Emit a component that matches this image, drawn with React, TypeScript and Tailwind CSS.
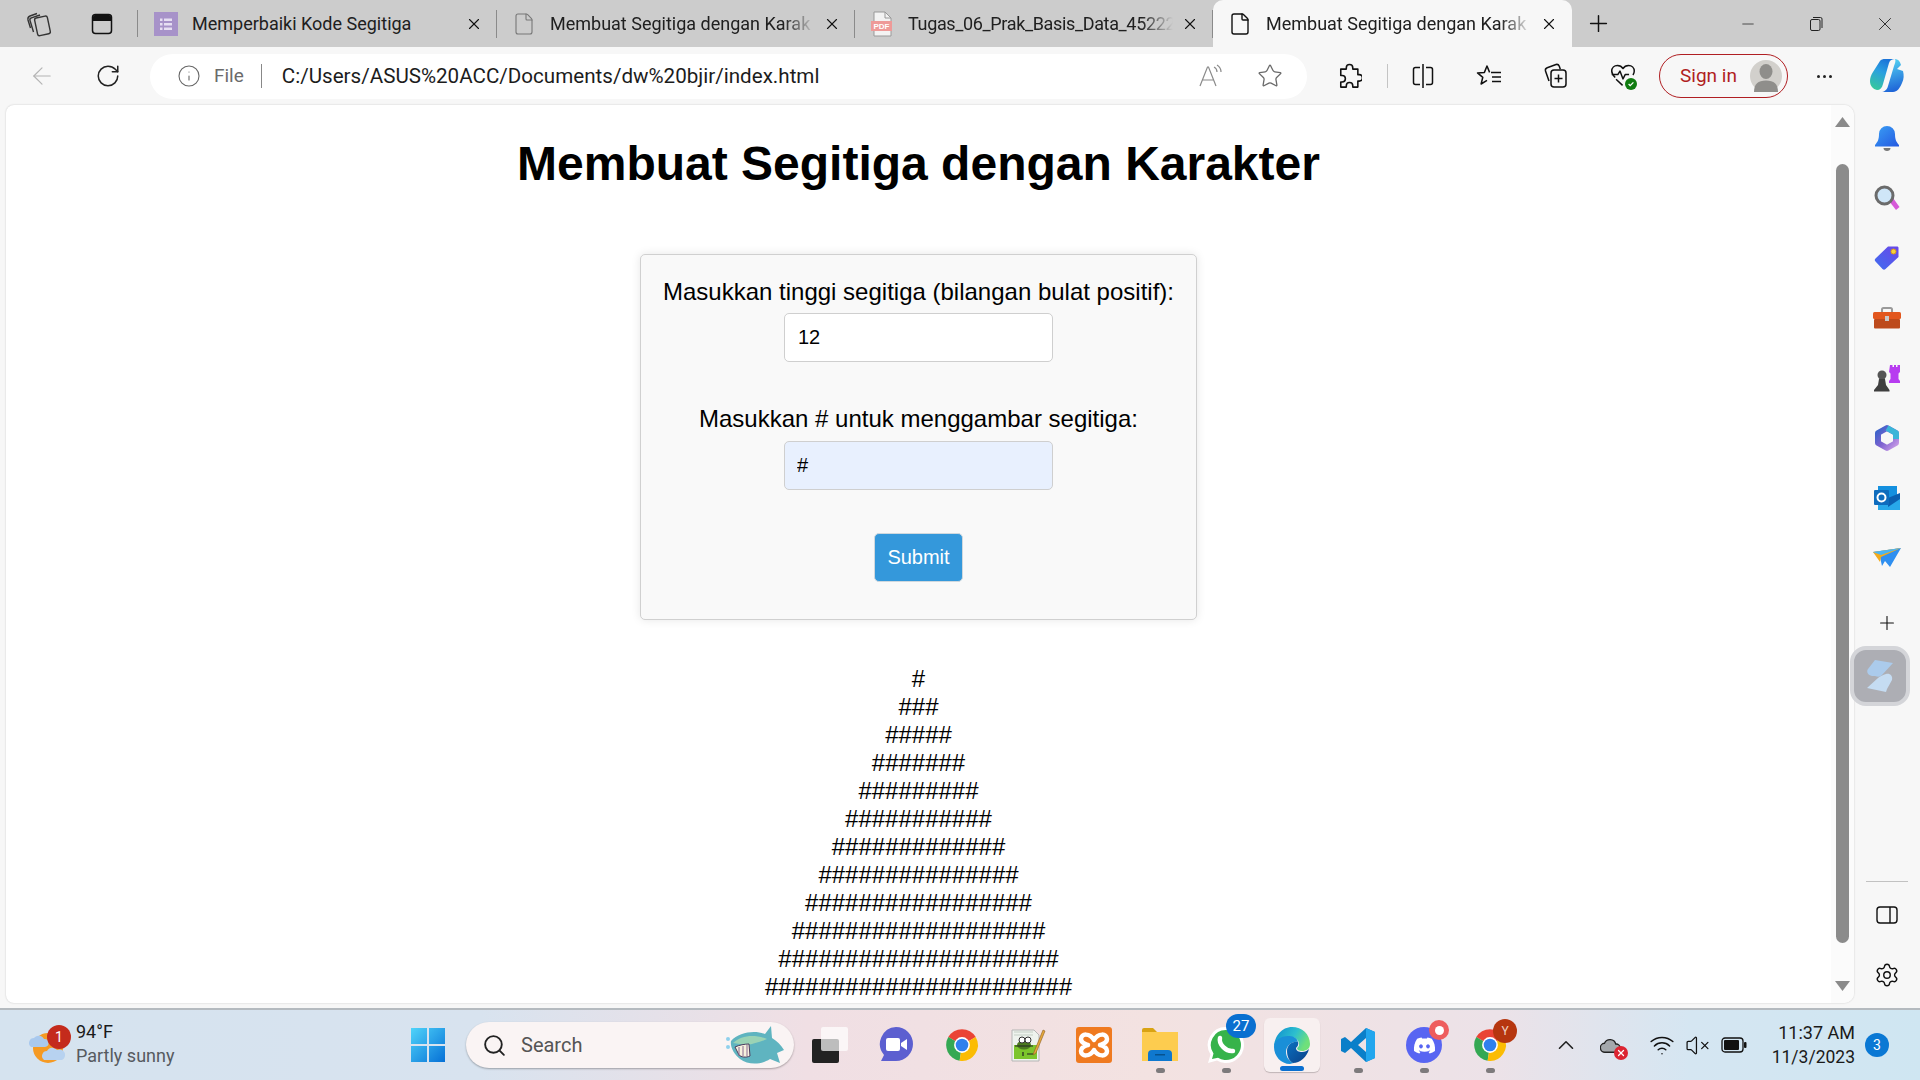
import type { ReactNode } from "react";
import {
  ArrowLeft,
  ChevronUp,
  File,
  Info,
  Minus,
  Plus,
  RotateCw,
  Search,
  Settings,
  Star,
  VolumeX,
  Wifi,
  X,
} from "lucide-react";
import { FaDiscord } from "react-icons/fa";

const chrome = "font-['Roboto','Noto_Sans',sans-serif]";

function FormsIcon() {
  return (
    <svg width="24" height="24" viewBox="0 0 24 24">
      <rect width="24" height="24" fill="#a792c9" />
      <g fill="#e6def2">
        <rect x="6" y="6.500" width="2.500" height="2.500" />
        <rect x="6" y="11" width="2.500" height="2.500" />
        <rect x="6" y="15.500" width="2.500" height="2.500" />
        <rect x="10" y="6.500" width="8" height="2.500" />
        <rect x="10" y="11" width="8" height="2.500" />
        <rect x="10" y="15.500" width="8" height="2.500" />
      </g>
    </svg>
  );
}

function PdfIcon() {
  return (
    <svg width="24" height="26" viewBox="0 0 24 26">
      <path d="M4 1h11l6 6v18H4z" fill="#f3f3f3" stroke="#999" />
      <path d="M15 1v6h6" fill="none" stroke="#999" />
      <rect x="1" y="10" width="21" height="10" fill="#ee9a98" />
      <text x="11.500" y="18" fontSize="8" fontWeight="700" textAnchor="middle" fill="#fff" fontFamily="Liberation Sans">
        PDF
      </text>
    </svg>
  );
}

function Tab({ icon, title, fade, tight, active }: { icon: ReactNode; title: string; fade?: boolean; tight?: boolean; active?: boolean }) {
  return (
    <div
      className={
        active
          ? "flex h-full w-[359px] shrink-0 items-center rounded-t-[10px] bg-[#f7f7f7] pl-[15px] pr-[14px]"
          : "flex h-full w-[358px] shrink-0 items-center border-r border-[#8a8a8a] pl-[15px] pr-[13px] [border-image:linear-gradient(to_bottom,transparent_22%,#8a8a8a_22%,#8a8a8a_80%,transparent_80%)_1]"
      }
    >
      <div className="flex w-[24px] shrink-0 justify-center">{icon}</div>
      <div
        className={
          fade
            ? `ml-[14px] min-w-0 flex-1 whitespace-nowrap text-[18px] text-[#202020] [mask-image:linear-gradient(to_right,black_88%,transparent)] ${tight ? "tracking-[-0.35px]" : ""}`
            : "ml-[14px] min-w-0 flex-1 whitespace-nowrap text-[18px] text-[#202020]"
        }
      >
        {title}
      </div>
      <X size={18} strokeWidth={1.5} className="ml-[8px] shrink-0 text-[#111]" />
    </div>
  );
}

function TabBar() {
  return (
    <div className="flex h-[47px] shrink-0 items-stretch bg-[#cccccc]">
      <div className="flex w-[78px] items-center justify-center">
        <svg width="26" height="26" viewBox="0 0 26 26" fill="none" stroke="#333" strokeWidth="1.400">
          <rect x="10" y="6" width="13" height="18" rx="2" transform="rotate(-12 16 15)" />
          <path d="M7.500 21 4 9.500c-.4-1.200.3-2.200 1.400-2.600L14 4" />
          <path d="M4.500 17 2 9C1.600 7 2.500 5.500 4 5l7-2.500" />
        </svg>
      </div>
      <div className="flex w-[48px] items-center justify-center">
        <svg width="24" height="24" viewBox="0 0 24 24" fill="none">
          <rect x="2.500" y="2.500" width="19" height="19" rx="3" stroke="#111" strokeWidth="1.500" />
          <path d="M3 5a2 2 0 0 1 2-2h14a2 2 0 0 1 2 2v4H3z" fill="#111" />
        </svg>
      </div>
      <div className="my-[10px] ml-[11px] mr-[1px] w-px bg-[#8a8a8a]" />
      <Tab icon={<FormsIcon />} title="Memperbaiki Kode Segitiga" />
      <Tab icon={<File size={24} strokeWidth={1.1} className="text-[#777]" />} title="Membuat Segitiga dengan Karak" fade />
      <Tab icon={<PdfIcon />} title="Tugas_06_Prak_Basis_Data_45222" fade tight />
      <Tab icon={<File size={24} strokeWidth={1.4} className="text-[#111]" />} title="Membuat Segitiga dengan Karak" fade active />
      <div className="flex w-[52px] items-center justify-center">
        <Plus size={27} strokeWidth={1.3} className="text-[#111]" />
      </div>
      <div className="flex-1" />
      <div className="flex w-[68px] items-center justify-center">
        <Minus size={18} strokeWidth={1} className="text-[#222]" />
      </div>
      <div className="flex w-[68px] items-center justify-center">
        <svg width="16" height="16" viewBox="0 0 16 16" fill="none" stroke="#222">
          <rect x="2.500" y="3.500" width="9.500" height="11" rx="1.500" />
          <path d="M5 1.500h7.500a1.500 1.500 0 0 1 1.500 1.500v9" />
        </svg>
      </div>
      <div className="flex w-[70px] items-center justify-center">
        <X size={22} strokeWidth={1} className="text-[#222]" />
      </div>
    </div>
  );
}

function ToolButton({ width, children }: { width: string; children: ReactNode }) {
  return <div className={`${width} flex h-full shrink-0 items-center justify-center`}>{children}</div>;
}

function Avatar() {
  return (
    <svg width="32" height="32" viewBox="0 0 32 32">
      <circle cx="16" cy="16" r="16" fill="#d2d0cc" />
      <ellipse cx="16" cy="11.500" rx="6.500" ry="7.500" fill="#8f8e8b" />
      <path d="M4 32c0-8 4-11.500 12-11.500S28 24 28 32z" fill="#8f8e8b" />
    </svg>
  );
}

function CopilotIcon() {
  return (
    <svg width="36" height="36" viewBox="0 0 36 36">
      <defs>
        <linearGradient id="copilotA" x1="0.2" y1="1" x2="0.6" y2="0">
          <stop offset="0" stopColor="#37c99a" />
          <stop offset="0.6" stopColor="#2a9fe0" />
          <stop offset="1" stopColor="#1c74d8" />
        </linearGradient>
        <linearGradient id="copilotB" x1="0.7" y1="1" x2="0.5" y2="0">
          <stop offset="0" stopColor="#1c5fd6" />
          <stop offset="1" stopColor="#52d2f2" />
        </linearGradient>
      </defs>
      <path d="M11 3c1-1.500 3-2 5-2h10c-3 0-5 1-6 4l-6 21c-1 4-3 6-6 6-4-1-7-4-7-9 0-3 1-6 3-9z" fill="url(#copilotA)" />
      <path d="M26 1c3 0 5 2 6 6l-4 4 6 2c1 4 1 8-1 12-2 5-5 9-9 9H12c3 0 6-2 7-6l6-20c1-3 2-5 1-7z" fill="url(#copilotB)" />
    </svg>
  );
}

function Toolbar() {
  return (
    <div className="flex h-[58px] shrink-0 items-center bg-[#f7f7f7] pl-[10px]">
      <ToolButton width="w-[64px]">
        <ArrowLeft size={28} strokeWidth={1} className="text-[#b4b4b4]" />
      </ToolButton>
      <ToolButton width="w-[68px]">
        <RotateCw size={26} strokeWidth={1.4} className="text-[#222]" />
      </ToolButton>
      <div className="ml-[8px] flex h-[45px] w-[1157px] shrink-0 items-center rounded-full bg-white pl-[27px] pr-[24px]">
        <Info size={24} strokeWidth={1.1} className="text-[#666]" />
        <span className="ml-[13px] pt-[1px] text-[19px] text-[#6b6b6b]">File</span>
        <div className="ml-[17px] h-[24px] w-px bg-[#888]" />
        <span className="ml-[20px] flex-1 whitespace-nowrap pt-[1px] text-[20.600px] text-[#1c1c1c]">
          C:/Users/ASUS%20ACC/Documents/dw%20bjir/index.html
        </span>
        <svg width="28" height="28" viewBox="0 0 28 28" fill="none" stroke="#8a8a8a" strokeWidth="1.200">
          <path d="M3 24 10.500 5h1L19 24M5.500 18h11" />
          <path d="M17 5c2 1 3 3 3 5M20 3c2.500 1.500 4 4 4 7" />
        </svg>
        <Star size={26} strokeWidth={1.2} className="ml-[32px] text-[#6a6a6a]" />
      </div>
      <ToolButton width="ml-[13px] w-[60px]">
        <svg width="24" height="27" viewBox="0 0 26 28" fill="none" stroke="#111" strokeWidth="1.700" strokeLinejoin="round">
          <path d="M9 4.500a3.500 3.500 0 0 1 7 0V6h5.500v6H23a3.500 3.500 0 0 1 0 7h-1.500v6.500H16V24a3.500 3.500 0 0 0-7 0v1.500H3V20h1.500a3.500 3.500 0 0 0 0-7H3V6h6z" />
        </svg>
      </ToolButton>
      <div className="ml-[7px] h-[24px] w-px bg-[#c4c4c4]" />
      <ToolButton width="ml-[5px] w-[60px]">
        <svg width="24" height="26" viewBox="0 0 24 26" fill="none" stroke="#111" strokeWidth="1.500">
          <path d="M9 4.500H4.500a2 2 0 0 0-2 2v13a2 2 0 0 0 2 2H9M15 4.500h4.500a2 2 0 0 1 2 2v13a2 2 0 0 1-2 2H15M12 1v24" />
        </svg>
      </ToolButton>
      <ToolButton width="w-[71px]">
        <svg width="26" height="26" viewBox="0 0 26 26" fill="none" stroke="#111" strokeWidth="1.500" strokeLinejoin="round">
          <path d="M13.600 9.400 11 3 8.400 9.400 1.500 9.900 6.800 14.300 5.100 21 11 17.400" />
          <path d="M15 9.500h10M16 14h9M16 18.500h9" />
        </svg>
      </ToolButton>
      <ToolButton width="w-[63px]">
        <svg width="28" height="28" viewBox="0 0 28 28" fill="none" stroke="#111" strokeWidth="1.500">
          <path d="M7 19 3.500 9c-.4-1.500.3-2.700 1.700-3.200L14 2.500c1.500-.4 2.700.3 3.300 1.700l1 3" />
          <rect x="9" y="8" width="15" height="17" rx="3" />
          <path d="M16.500 12.500v8M12.500 16.500h8" />
        </svg>
      </ToolButton>
      <ToolButton width="w-[71px]">
        <div className="relative h-[28px] w-[26px]">
          <svg width="26" height="26" viewBox="0 0 30 28" fill="none" stroke="#111" strokeWidth="1.700" strokeLinejoin="round">
            <path d="M6 17C3.500 14.500 2 12.500 2 9.500 2 5.500 5 3 8.500 3c2.500 0 5 1 6.500 3.500C16.500 4 19 3 21.500 3 25 3 28 5.500 28 9.500c0 1.500-.5 3-1.500 4.500" />
            <path d="M2 13.500h7l2.500-4 3.500 9 2.500-5H22M7 19l7.500 7" />
          </svg>
          <span className="absolute bottom-[0px] -right-[1px] flex h-[12px] w-[12px] items-center justify-center rounded-full bg-[#107c10]">
            <svg width="8" height="8" viewBox="0 0 10 10" fill="none" stroke="#fff" strokeWidth="1.600">
              <path d="m2 5 2 2 4-4" />
            </svg>
          </span>
        </div>
      </ToolButton>
      <div className="ml-[1px] flex h-[44px] w-[129px] shrink-0 items-center justify-between rounded-full border-[1.5px] border-[#b01e22] pl-[20px] pr-[5px]">
        <span className="pt-[1px] text-[19px] text-[#b01e22]">Sign in</span>
        <Avatar />
      </div>
      <ToolButton width="w-[73px]">
        <span className="flex gap-[3px]">
          <i className="h-[3px] w-[3px] rounded-full bg-[#222]" />
          <i className="h-[3px] w-[3px] rounded-full bg-[#222]" />
          <i className="h-[3px] w-[3px] rounded-full bg-[#222]" />
        </span>
      </ToolButton>
      <ToolButton width="w-[52px]">
        <CopilotIcon />
      </ToolButton>
    </div>
  );
}

function Field({ label, value, filled }: { label: string; value: string; filled?: boolean }) {
  return (
    <div className="flex flex-col items-center">
      <label className="text-[24px] leading-[27px] text-black">{label}</label>
      <input
        readOnly
        value={value}
        className={
          filled
            ? "mt-[9px] h-[49px] w-[269px] rounded-[5px] border border-[#cfcfcf] bg-[#e8f0fe] px-[12px] text-[20px] text-black outline-none"
            : "mt-[8px] h-[49px] w-[269px] rounded-[5px] border border-[#cfcfcf] bg-white px-[13px] text-[20px] text-black outline-none"
        }
      />
    </div>
  );
}

const rows = Array.from({ length: 12 }, (_, i) => "#".repeat(i * 2 + 1));

function Page() {
  return (
    <div className="flex min-w-0 flex-1 overflow-hidden rounded-l-[8px] rounded-r-[10px] bg-white shadow-[0_0_2px_rgba(0,0,0,0.2)]">
      <div className="min-w-0 flex-1 overflow-hidden font-['Liberation_Sans',Arial,sans-serif]">
        <h1 className="mt-[31px] text-center text-[48px] font-bold leading-[55px] text-black">
          Membuat Segitiga dengan Karakter
        </h1>
        <form className="mx-auto mt-[63px] flex h-[366px] w-[557px] flex-col rounded-[5px] border border-[#d0d0d0] bg-[#f9f9f9] pt-[23px] shadow-[0_0_10px_rgba(0,0,0,0.1)]">
          <Field label="Masukkan tinggi segitiga (bilangan bulat positif):" value="12" />
          <div className="h-[43px]" />
          <Field label="Masukkan # untuk menggambar segitiga:" value="#" filled />
          <button
            type="button"
            className="mx-auto mt-[43px] h-[49px] w-[89px] rounded-[5px] border border-[#cfd8de] bg-[#3498db] pb-[2px] text-[20px] text-white"
          >
            Submit
          </button>
        </form>
        <div className="mt-[45px] text-center text-[24px] leading-[28px] text-black">
          {rows.map((row) => (
            <div key={row}>{row}</div>
          ))}
        </div>
      </div>
      <div className="flex w-[23px] shrink-0 flex-col items-center bg-[#fbfbfb] pb-[12px] pt-[12px]">
        <svg width="15" height="10" viewBox="0 0 15 10">
          <path d="M7.500 0 15 10H0z" fill="#8a8a8a" />
        </svg>
        <div className="mt-[37px] w-[13px] flex-1 rounded-full bg-[#8b8b8b]" />
        <svg className="mt-[38px]" width="15" height="10" viewBox="0 0 15 10">
          <path d="M7.500 10 15 0H0z" fill="#8a8a8a" />
        </svg>
      </div>
    </div>
  );
}

function SideSlot({ children }: { children: ReactNode }) {
  return <div className="flex h-[60px] w-full items-center justify-center">{children}</div>;
}

function Sidebar() {
  return (
    <div className="flex w-[66px] shrink-0 flex-col items-center pb-[3px] pt-[3px]">
      <SideSlot>
        <svg width="26" height="28" viewBox="0 0 26 28">
          <defs>
            <linearGradient id="bell" x1="0" y1="0" x2="1" y2="1">
              <stop offset="0" stopColor="#3aa0f5" />
              <stop offset="1" stopColor="#2458e0" />
            </linearGradient>
          </defs>
          <path d="M5 10a8 8 0 0 1 16 0c0 6 1.500 8 4 11v1.500H1V21c2.500-3 4-5 4-11z" fill="url(#bell)" />
          <path d="M9.500 24h7c0 2-1.500 3-3.500 3s-3.500-1-3.500-3z" fill="#777" />
        </svg>
      </SideSlot>
      <SideSlot>
        <svg width="26" height="26" viewBox="0 0 26 26">
          <path d="m15 16 4-3 6.500 9-3.500 3z" fill="#d65ad8" />
          <circle cx="10.500" cy="10.500" r="8.500" fill="#cfe6f8" stroke="#6b6b6b" strokeWidth="3" />
        </svg>
      </SideSlot>
      <SideSlot>
        <svg width="26" height="26" viewBox="0 0 26 26">
          <defs>
            <linearGradient id="tag" x1="0" y1="1" x2="1" y2="0">
              <stop offset="0" stopColor="#3f6ef0" />
              <stop offset="1" stopColor="#6a46e8" />
            </linearGradient>
          </defs>
          <path d="M14 1.500h9c1 0 1.500.5 1.500 1.500v9L11.500 24c-1 1-2 1-3 0L1.500 16.500c-1-1-1-2 0-3z" fill="url(#tag)" />
          <circle cx="19.500" cy="6.500" r="2.500" fill="#f4d23c" stroke="#e29a15" />
        </svg>
      </SideSlot>
      <SideSlot>
        <svg width="28" height="22" viewBox="0 0 28 22">
          <path d="M9 5V2.500A1.500 1.500 0 0 1 10.500 1h7A1.500 1.500 0 0 1 19 2.500V5" fill="none" stroke="#9a9a9a" strokeWidth="2" />
          <rect y="5" width="28" height="7" rx="1.500" fill="#e2571e" />
          <rect x="1" y="12" width="26" height="9.500" rx="1" fill="#bd4a1c" />
          <rect x="12" y="9" width="4" height="5" fill="#c9c9c9" />
        </svg>
      </SideSlot>
      <SideSlot>
        <svg width="28" height="28" viewBox="0 0 28 28">
          <path d="M17 1h2.500v2H21V1h2v2h1.500V1H27v7l-1.500 1.500V15L27 17v2H16v-2l1.500-2V9.500L16 8z" fill="#b73cf0" />
          <circle cx="9" cy="11" r="4.500" fill="#555" />
          <path d="M6 15h6l1 6 3.500 5v1.500H1V26l4-5z" fill="#3f3f3f" />
        </svg>
      </SideSlot>
      <SideSlot>
        <svg width="26" height="28" viewBox="0 0 26 28">
          <defs>
            <linearGradient id="m365" x1="0" y1="0" x2="1" y2="1">
              <stop offset="0" stopColor="#3563c9" />
              <stop offset="0.5" stopColor="#7d62d0" />
              <stop offset="1" stopColor="#c99be6" />
            </linearGradient>
          </defs>
          <path d="M13 4 22 9v10l-9 5-9-5V9z" fill="none" stroke="url(#m365)" strokeWidth="6" strokeLinejoin="round" />
          <path d="M13 4 22 9v6" fill="none" stroke="#3ab5d8" strokeWidth="6" strokeLinejoin="round" />
        </svg>
      </SideSlot>
      <SideSlot>
        <svg width="26" height="26" viewBox="0 0 26 26">
          <rect x="4" y="1" width="19" height="12" fill="#1490df" />
          <path d="M4 13h22v12H4z" fill="#28a8ea" />
          <path d="M14 13 26 8v6L14 22z" fill="#0a5fb0" />
          <rect y="5" width="15" height="15" rx="1" fill="#0f6cbd" />
          <circle cx="7.500" cy="12.500" r="4" fill="none" stroke="#fff" strokeWidth="2" />
        </svg>
      </SideSlot>
      <SideSlot>
        <svg width="28" height="20" viewBox="0 0 28 20">
          <path d="M0 4 28 0 17 19l-5-6-3 5-2-9z" fill="#2f8ff0" />
          <path d="M0 4 28 0 8 9 7 14z" fill="#f3aa1c" />
          <path d="M0 4 28 0 8 7z" fill="#48b5f5" />
        </svg>
      </SideSlot>
      <div className="mt-[15px] flex h-[40px] items-center">
        <Plus size={22} strokeWidth={1.2} className="text-[#111]" />
      </div>
      <div className="-ml-[4px] mt-[3px] flex h-[60px] w-[60px] items-center justify-center self-start rounded-[16px] border-[4px] border-[#d4d5d9] bg-[#adaeb4]">
        <svg width="28" height="34" viewBox="0 0 28 34">
          <path d="M9 1 27 4 16 16c-2 2-4 2-7 1H6C2 16 0 13 2 10z" fill="#abcbec" />
          <path d="M20 15c4-1 7 2 6 6l-5 9-1 3L1 29 12 19c2-2 5-3 8-4z" fill="#c5dcf2" />
        </svg>
      </div>
      <div className="mb-[3px] mt-auto h-px w-[42px] bg-[#c2c2c2]" />
      <SideSlot>
        <svg width="22" height="18" viewBox="0 0 22 18" fill="none" stroke="#111" strokeWidth="1.400">
          <rect x="1" y="1" width="20" height="16" rx="3" />
          <path d="M14 1v16" />
        </svg>
      </SideSlot>
      <SideSlot>
        <Settings size={26} strokeWidth={1.3} className="text-[#111]" />
      </SideSlot>
    </div>
  );
}

function WeatherIcon() {
  return (
    <div className="relative h-[40px] w-[36px] shrink-0">
      <svg width="36" height="40" viewBox="0 0 36 40">
        <circle cx="19" cy="23" r="15" fill="#f59a23" />
        <path d="M2 22a5 5 0 0 1 3-9 6 6 0 0 1 10 1 4 4 0 0 1 1 8z" fill="#a9c9ee" />
        <path d="M15 35a5 5 0 0 1 3-9 6 6 0 0 1 10-1 5 5 0 0 1 5 10z" fill="#b7d2f0" />
      </svg>
      <span className="absolute left-[18px] top-0 flex h-[24px] w-[24px] items-center justify-center rounded-full bg-[#c42b1c] text-[14px] text-white">
        1
      </span>
    </div>
  );
}

function WindowsIcon() {
  return (
    <svg width="36" height="36" viewBox="0 0 36 36">
      <defs>
        <linearGradient id="win" x1="0" y1="0" x2="1" y2="1">
          <stop offset="0" stopColor="#4fd4fa" />
          <stop offset="1" stopColor="#0670d6" />
        </linearGradient>
      </defs>
      <path d="M1 1h16v16H1zM19 1h16v16H19zM1 19h16v16H1zM19 19h16v16H19z" fill="url(#win)" />
    </svg>
  );
}

function SharkIcon() {
  return (
    <svg width="60" height="40" viewBox="0 0 60 40">
      <path d="M6 16C14 7 30 5 40 9l6-8 1 12c5 3 9 7 12 12l-7 3 3 10-10-4c-9 6-22 6-30 0C9 29 5 22 6 16z" fill="#5fb4c0" />
      <path d="M8 18c8-8 22-9 34-4-6 3-14 5-20 6z" fill="#9ad3b5" />
      <path d="M10 22c4-2 10-3 14-3l1 12c-4 2-9 1-11-1z" fill="#f5f1dd" stroke="#4c3a5c" />
      <path d="M14 22v9M18 21v10M22 20v11" stroke="#8a6a90" />
      <circle cx="3" cy="14" r="2" fill="#8fd0ec" />
      <circle cx="3" cy="22" r="2" fill="#8fd0ec" />
    </svg>
  );
}

function SearchBox() {
  return (
    <div className="ml-[5px] flex h-[46px] w-[328px] shrink-0 items-center rounded-full bg-[#faf4f4] pl-[16px] pr-[9px] shadow-[0_1px_2px_rgba(0,0,0,0.3)]">
      <Search size={25} strokeWidth={1.8} className="text-[#222]" />
      <span className="ml-[14px] flex-1 text-[20px] text-[#555]">Search</span>
      <SharkIcon />
    </div>
  );
}

function ChromeIcon() {
  return (
    <svg width="38" height="38" viewBox="0 0 48 48">
      <path d="M24 24 6.680 14A20 20 0 0 1 41.320 14z" fill="#ea4335" />
      <path d="M24 24 6.680 14A20 20 0 0 0 21 43.800z" fill="#34a853" />
      <path d="M24 24 41.320 14A20 20 0 0 1 21 43.800z" fill="#fbbc04" />
      <circle cx="24" cy="24" r="10" fill="#fff" />
      <circle cx="24" cy="24" r="8" fill="#2f80ed" />
    </svg>
  );
}

function EdgeIcon() {
  return (
    <svg width="38" height="38" viewBox="0 0 38 38">
      <defs>
        <linearGradient id="edgeA" x1="0" y1="0" x2="1" y2="0.4">
          <stop offset="0" stopColor="#0c8ad0" />
          <stop offset="0.6" stopColor="#2dbfce" />
          <stop offset="1" stopColor="#6fe07a" />
        </linearGradient>
        <linearGradient id="edgeB" x1="0" y1="0" x2="1" y2="1">
          <stop offset="0" stopColor="#0a70c0" />
          <stop offset="1" stopColor="#0b3f86" />
        </linearGradient>
      </defs>
      <path d="M19 1C29 1 37 8 37 18c0 5-4 7-8 7-3 0-5-1-5-3 2-1 2-3 2-4 0-4-4-7-8-7C9 11 2 15 1 22 1 10 9 1 19 1z" fill="url(#edgeA)" />
      <path d="M1 21c0-7 7-11 14-11 4 0 9 1 10 6-5-1-12 3-12 10 0 5 3 9 8 11-2 0-3 1-4 1C8 38 1 30 1 21z" fill="#1a8fd8" />
      <path d="M14 25c0-6 5-10 11-9 1 3-1 5-2 6 0 3 3 4 6 4 3 0 5-1 7-3-2 8-9 14-16 14-4-2-6-7-6-12z" fill="url(#edgeB)" />
    </svg>
  );
}

function VsCodeIcon() {
  return (
    <svg width="36" height="36" viewBox="0 0 36 36">
      <path d="M26 1 35 5v26l-9 4L11 21l-6 5-4-2v-12l4-2 6 5zM26 11l-8 7 8 7z" fill="#0a7fc9" />
      <path d="M26 1 35 5v26l-9 4z" fill="#22a6ee" />
    </svg>
  );
}

function WhatsappIcon() {
  return (
    <svg width="38" height="38" viewBox="0 0 38 38">
      <path d="M19 1a18 18 0 1 1-9 33.600L1 37l2.500-8.500A18 18 0 0 1 19 1z" fill="#fff" />
      <path d="M19 4a15 15 0 1 1-8 27.700L5 33l1.500-5.500A15 15 0 0 1 19 4z" fill="#36b34a" />
      <path d="M13 12c-1.500 6 6 14 13 13" fill="none" stroke="#fff" strokeWidth="4.500" strokeLinecap="round" />
    </svg>
  );
}

function XamppIcon() {
  return (
    <svg width="36" height="36" viewBox="0 0 36 36">
      <rect width="36" height="36" rx="3" fill="#ef7a20" />
      <path
        d="M18 13C14 6 5 6 5 12c0 4 4 5 7 6-3 1-7 2-7 6 0 6 9 6 13-1 4 7 13 7 13 1 0-4-4-5-7-6 3-1 7-2 7-6 0-6-9-6-13 1z"
        fill="none"
        stroke="#fff"
        strokeWidth="4.500"
        strokeLinejoin="round"
      />
    </svg>
  );
}

function NotepadIcon() {
  return (
    <svg width="36" height="36" viewBox="0 0 36 36">
      <path d="M2 3h22l5 5v26H2z" fill="#eef3ee" stroke="#b5b5b5" />
      <path d="M4 5h19M4 8h19" stroke="#c4cfc4" />
      <rect x="4" y="18" width="23" height="14" fill="#7cc52c" />
      <ellipse cx="14" cy="18" rx="7" ry="4.500" fill="#4b7a1e" />
      <circle cx="12" cy="13" r="3" fill="#fff" stroke="#333" />
      <circle cx="18" cy="13" r="3" fill="#fff" stroke="#333" />
      <path d="M5 19h18M13 25v4M17 27h6" stroke="#222" strokeWidth="1.200" />
      <path d="m24 25 9-22 2 1-9 22-3 2z" fill="#e5a83a" stroke="#8a5a20" strokeWidth=".6" />
    </svg>
  );
}

function AppSlot({ children, running, active }: { children: ReactNode; running?: boolean; active?: boolean }) {
  return (
    <div className="relative flex h-full w-[66px] shrink-0 items-center justify-center">
      {active && (
        <div className="absolute inset-x-[5px] bottom-[8px] top-[8px] rounded-[6px] bg-[#f8f0f0] shadow-[0_1px_1px_rgba(0,0,0,0.2)]" />
      )}
      <div className="relative">{children}</div>
      {running && !active && <i className="absolute bottom-[7px] h-[5px] w-[9px] rounded-full bg-[#7d7a7c]" />}
      {active && <i className="absolute bottom-[9px] h-[5px] w-[24px] rounded-full bg-[#0a6fd0]" />}
    </div>
  );
}

function Taskbar() {
  return (
    <div className="flex h-[72px] shrink-0 items-stretch border-t-2 border-[#b4babf] bg-[linear-gradient(to_right,#d5e3ef_0%,#d8e3ef_25%,#f0dfe4_42%,#f3e2e1_60%,#ece2e8_78%,#d5e6f2_88%,#cfe6f2_100%)] text-[#1a1a1a]">
      <div className="flex w-[395px] shrink-0 items-center pl-[29px]">
        <WeatherIcon />
        <div className="-mt-[3px] ml-[11px] flex flex-col text-[18px] leading-[24px]">
          <span>94°F</span>
          <span className="text-[#565a60]">Partly sunny</span>
        </div>
      </div>
      <div className="flex w-[66px] shrink-0 items-center justify-center">
        <WindowsIcon />
      </div>
      <div className="flex items-center">
        <SearchBox />
      </div>
      <div className="ml-[3px] flex h-full">
        <AppSlot>
          <div className="relative h-[36px] w-[36px]">
            <div className="absolute bottom-0 left-0 h-[24px] w-[27px] rounded-[2px] bg-[#222]" />
            <div className="absolute right-0 top-0 h-[24px] w-[27px] rounded-[2px] bg-white/70" />
          </div>
        </AppSlot>
        <AppSlot>
          <svg width="36" height="38" viewBox="0 0 36 38">
            <path d="M18 1a17 17 0 0 1 0 34H3l3-6A17 17 0 0 1 18 1z" fill="#5c5fd0" />
            <rect x="8" y="12" width="14" height="13" rx="2" fill="#fff" />
            <path d="m23 17 6-4v11l-6-4z" fill="#fff" />
          </svg>
        </AppSlot>
        <AppSlot>
          <ChromeIcon />
        </AppSlot>
        <AppSlot>
          <NotepadIcon />
        </AppSlot>
        <AppSlot>
          <XamppIcon />
        </AppSlot>
        <AppSlot running>
          <svg width="36" height="36" viewBox="0 0 36 36">
            <path d="M0 3a2 2 0 0 1 2-2h9l4 4h21v4H0z" fill="#d9a313" />
            <rect y="5" width="36" height="29" fill="#fdcc4f" />
            <path d="M6 27a4 4 0 0 1 4-4h16a4 4 0 0 1 4 4v7H6z" fill="#0f78cf" />
            <rect x="13" y="27" width="10" height="1.500" fill="#07528f" />
          </svg>
        </AppSlot>
        <AppSlot running>
          <div className="relative">
            <WhatsappIcon />
            <span className="absolute -right-[11px] -top-[12px] flex h-[24px] w-[30px] items-center justify-center rounded-full bg-[#0a6fd0] text-[15px] text-white">
              27
            </span>
          </div>
        </AppSlot>
        <AppSlot active>
          <EdgeIcon />
        </AppSlot>
        <AppSlot running>
          <VsCodeIcon />
        </AppSlot>
        <AppSlot running>
          <div className="relative">
            <div className="flex h-[36px] w-[36px] items-center justify-center rounded-full bg-[#5865f2]">
              <FaDiscord size={23} className="text-white" />
            </div>
            <span className="absolute -right-[7px] -top-[7px] flex h-[20px] w-[20px] items-center justify-center rounded-full bg-[#ee5d5d]">
              <i className="h-[9px] w-[9px] rounded-full bg-white" />
            </span>
          </div>
        </AppSlot>
        <AppSlot running>
          <div className="relative">
            <ChromeIcon />
            <span className="absolute -right-[8px] -top-[7px] flex h-[24px] w-[24px] items-center justify-center rounded-full bg-[#b6360f] text-[12px] text-[#f0d0c0]">
              Y
            </span>
          </div>
        </AppSlot>
      </div>
      <div className="ml-[23px] flex w-[40px] items-center justify-center">
        <ChevronUp size={26} strokeWidth={1.500} className="text-[#222]" />
      </div>
      <div className="flex w-[54px] items-center justify-center">
        <div className="relative -ml-[6px]">
          <svg width="21" height="17" viewBox="0 0 28 20">
            <path d="M7 19a6 6 0 0 1-1-12 8 8 0 0 1 15 1 5 5 0 0 1 1 11z" fill="#a4a8ac" stroke="#222" strokeWidth="1.800" />
          </svg>
          <span className="absolute -bottom-[6px] -right-[7px] flex h-[14px] w-[14px] items-center justify-center rounded-full bg-[#dc2431]">
            <X size={10} strokeWidth={3} className="text-white" />
          </span>
        </div>
      </div>
      <div className="flex w-[44px] items-center justify-center">
        <Wifi size={26} strokeWidth={1.4} className="text-[#111]" />
      </div>
      <div className="flex w-[26px] items-center justify-center">
        <VolumeX size={25} strokeWidth={1.2} className="shrink-0 text-[#111]" />
      </div>
      <div className="flex w-[48px] items-center justify-center">
        <svg width="26" height="16" viewBox="0 0 26 16">
          <rect x="1" y="1" width="21" height="14" rx="3" fill="none" stroke="#111" strokeWidth="1.300" />
          <rect x="3" y="3" width="15" height="10" rx="1" fill="#111" />
          <rect x="23" y="5" width="2.500" height="6" rx="1" fill="#111" />
        </svg>
      </div>
      <div className="flex w-[97px] flex-col items-end justify-center text-[17.500px] leading-[24px]">
        <span className="text-[18px]">11:37 AM</span>
        <span>11/3/2023</span>
      </div>
      <div className="ml-[10px] flex items-center">
        <span className="flex h-[24px] w-[24px] items-center justify-center rounded-full bg-[#0a78d4] text-[14px] text-white">
          3
        </span>
      </div>
    </div>
  );
}

export default function App() {
  return (
    <div className={`${chrome} flex h-screen w-screen flex-col overflow-hidden bg-[#f7f7f7]`}>
      <TabBar />
      <Toolbar />
      <div className="flex min-h-0 flex-1 pl-[6px]">
        <div className="flex min-w-0 flex-1 pb-[5px]">
          <Page />
        </div>
        <Sidebar />
      </div>
      <Taskbar />
    </div>
  );
}
